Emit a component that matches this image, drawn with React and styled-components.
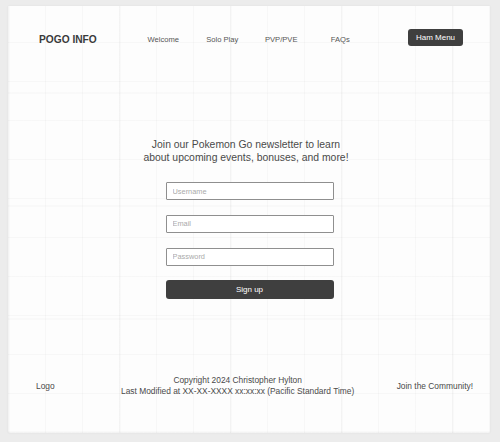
import React from 'react';
import styled, { createGlobalStyle } from 'styled-components';

const GlobalStyle = createGlobalStyle`
  html, body {
    margin: 0;
    padding: 0;
    background: #ececec;
    font-family: "Liberation Sans", Arial, sans-serif;
  }
`;

const Page = styled.div`
  padding: 6px 10px 9px 8px;
`;

const Card = styled.div`
  height: 427px;
  display: flex;
  flex-direction: column;
  background-color: #fdfdfd;
  background-image:
    repeating-linear-gradient(90deg, rgba(0, 0, 0, 0.022) 0 1px, transparent 1px 37px),
    repeating-linear-gradient(0deg, rgba(0, 0, 0, 0.022) 0 1px, transparent 1px 39px),
    repeating-linear-gradient(90deg, rgba(0, 0, 0, 0.015) 0 2px, transparent 2px 111px),
    repeating-linear-gradient(0deg, rgba(0, 0, 0, 0.015) 0 2px, transparent 2px 113px);
  box-shadow: 0 0 2px rgba(0, 0, 0, 0.06);
`;

const Header = styled.header`
  display: flex;
  align-items: center;
  padding: 23px 27px 0 31px;
`;

const Brand = styled.div`
  font-size: 10.2px;
  font-weight: bold;
  color: #3a3a3a;
  margin-top: 4px;
`;

const Nav = styled.nav`
  display: flex;
  margin-left: 37px;
  margin-top: 4px;
`;

const NavItem = styled.a`
  width: 59px;
  text-align: center;
  font-size: 7.6px;
  color: #555;
  text-decoration: none;
`;

const DarkButton = styled.button`
  border: none;
  border-radius: 3px;
  background: #3f3f3f;
  color: #fff;
  font-family: inherit;
  font-size: ${(p) => p.$size || 8}px;
  cursor: pointer;
  padding: 0;
`;

const HamButton = styled(DarkButton)`
  margin-left: auto;
  width: 55px;
  height: 17px;
`;

const Main = styled.main`
  display: flex;
  flex-direction: column;
  align-items: center;
  padding-top: 93px;
`;

const Heading = styled.p`
  margin: 0 6px 18px 0;
  font-size: 10.4px;
  line-height: 12.5px;
  color: #4a4a4a;
  text-align: center;
`;

const Form = styled.form`
  display: flex;
  flex-direction: column;
  gap: 14.4px;
  width: 168px;
  margin-left: 1px;
`;

const Field = styled.input`
  box-sizing: border-box;
  height: 18.4px;
  width: 100%;
  border: 1px solid #8f8f8f;
  border-radius: 1px;
  background: #fff;
  padding: 0 6px;
  font-family: inherit;
  font-size: 7.4px;
  color: #444;
  outline: none;

  &::placeholder {
    color: #aaa;
  }
`;

const SubmitButton = styled(DarkButton)`
  height: 18.4px;
  width: 100%;
`;

const Footer = styled.footer`
  margin-top: auto;
  display: flex;
  align-items: center;
  padding: 0 17px 36px 28px;
  font-size: 8.4px;
  color: #4a4a4a;
`;

const FooterCenter = styled.div`
  margin: 0 40px 0 64px;
  text-align: center;
  line-height: 11px;
  flex: 1;
`;

const navLinks = ['Welcome', 'Solo Play', 'PVP/PVE', 'FAQs'];

export default function App() {
  return (
    <>
      <GlobalStyle />
      <Page>
        <Card>
          <Header>
            <Brand>POGO INFO</Brand>
            <Nav>
              {navLinks.map((l) => (
                <NavItem key={l}>{l}</NavItem>
              ))}
            </Nav>
            <HamButton>Ham Menu</HamButton>
          </Header>
          <Main>
            <Heading>
              Join our Pokemon Go newsletter to learn
              <br />
              about upcoming events, bonuses, and more!
            </Heading>
            <Form onSubmit={(e) => e.preventDefault()}>
              <Field type="text" placeholder="Username" />
              <Field type="email" placeholder="Email" />
              <Field type="password" placeholder="Password" />
              <SubmitButton type="submit">Sign up</SubmitButton>
            </Form>
          </Main>
          <Footer>
            <div>Logo</div>
            <FooterCenter>
              Copyright 2024 Christopher Hylton
              <br />
              Last Modified at XX-XX-XXXX xx:xx:xx (Pacific Standard Time)
            </FooterCenter>
            <div>Join the Community!</div>
          </Footer>
        </Card>
      </Page>
    </>
  );
}
